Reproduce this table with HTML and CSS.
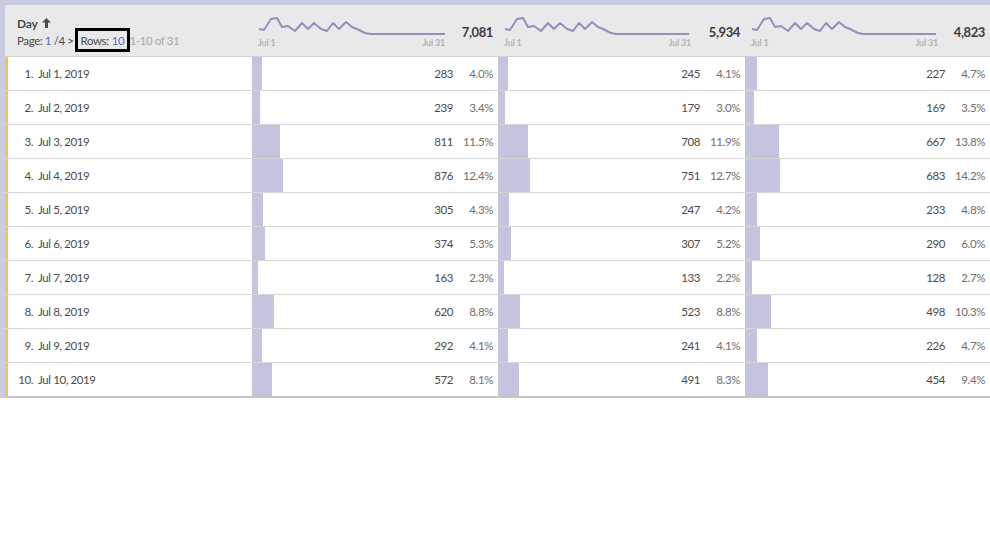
FILE: index.html
```html
<!DOCTYPE html>
<html>
<head>
<meta charset="utf-8">
<link rel="stylesheet" href="styles.css">
</head>
<body>
<div class="frame">
  <div class="table">
    <div class="head">
      <div class="hcell dim">
        <div class="dim-title">Day <svg class="arrow" width="9" height="10" viewBox="0 0 9 10"><path d="M4.5 0 L9 4.5 L6 4.5 L6 10 L3 10 L3 4.5 L0 4.5 Z" fill="#4b4b4b"/></svg></div>
        <div class="pager">
          <span>Page: <span class="link">1</span> /4 &gt;</span>
          <span class="rows">Rows: <span class="link">10</span></span>
          <span class="range">1-10 of 31</span>
        </div>
      </div>
      <div class="hcell metric">
        <div class="spark">
          <svg width="190" height="28" viewBox="0 0 190 28"><polyline points="1,19 6,20 13,9 19,8 24,17 30,16 37,21 44,13 50,19 56,13 63,19 69,21 75,13 81,19 88,12 94,17 99,19 107,23 112,24 187,24" fill="none" stroke="#9290bd" stroke-width="2" stroke-linejoin="round"/></svg>
          <div class="axis"><span>Jul 1</span><span>Jul 31</span></div>
        </div>
        <div class="total">7,081</div>
      </div>
      <div class="hcell metric">
        <div class="spark">
          <svg width="190" height="28" viewBox="0 0 190 28"><polyline points="1,19 6,20 13,9 19,8 24,17 30,16 37,21 44,13 50,19 56,13 63,19 69,21 75,13 81,19 88,12 94,17 99,19 107,23 112,24 185,24" fill="none" stroke="#9290bd" stroke-width="2" stroke-linejoin="round"/></svg>
          <div class="axis"><span>Jul 1</span><span>Jul 31</span></div>
        </div>
        <div class="total">5,934</div>
      </div>
      <div class="hcell metric">
        <div class="spark">
          <svg width="190" height="28" viewBox="0 0 190 28"><polyline points="1,19 6,20 13,9 19,8 24,17 30,16 37,21 44,13 50,19 56,13 63,19 69,21 75,13 81,19 88,12 94,17 99,19 107,23 112,24 185,24" fill="none" stroke="#9290bd" stroke-width="2" stroke-linejoin="round"/></svg>
          <div class="axis"><span>Jul 1</span><span>Jul 31</span></div>
        </div>
        <div class="total">4,823</div>
      </div>
    </div>

    <div class="row">
      <div class="cell date"><span class="idx">1.</span>Jul 1, 2019</div>
      <div class="cell m"><span class="bar" style="width:10px"></span><span class="val">283</span><span class="pct">4.0%</span></div>
      <div class="cell m"><span class="bar" style="width:10px"></span><span class="val">245</span><span class="pct">4.1%</span></div>
      <div class="cell m"><span class="bar" style="width:12px"></span><span class="val">227</span><span class="pct">4.7%</span></div>
    </div>
    <div class="row">
      <div class="cell date"><span class="idx">2.</span>Jul 2, 2019</div>
      <div class="cell m"><span class="bar" style="width:8px"></span><span class="val">239</span><span class="pct">3.4%</span></div>
      <div class="cell m"><span class="bar" style="width:7px"></span><span class="val">179</span><span class="pct">3.0%</span></div>
      <div class="cell m"><span class="bar" style="width:9px"></span><span class="val">169</span><span class="pct">3.5%</span></div>
    </div>
    <div class="row">
      <div class="cell date"><span class="idx">3.</span>Jul 3, 2019</div>
      <div class="cell m"><span class="bar" style="width:28px"></span><span class="val">811</span><span class="pct">11.5%</span></div>
      <div class="cell m"><span class="bar" style="width:30px"></span><span class="val">708</span><span class="pct">11.9%</span></div>
      <div class="cell m"><span class="bar" style="width:34px"></span><span class="val">667</span><span class="pct">13.8%</span></div>
    </div>
    <div class="row">
      <div class="cell date"><span class="idx">4.</span>Jul 4, 2019</div>
      <div class="cell m"><span class="bar" style="width:31px"></span><span class="val">876</span><span class="pct">12.4%</span></div>
      <div class="cell m"><span class="bar" style="width:32px"></span><span class="val">751</span><span class="pct">12.7%</span></div>
      <div class="cell m"><span class="bar" style="width:35px"></span><span class="val">683</span><span class="pct">14.2%</span></div>
    </div>
    <div class="row">
      <div class="cell date"><span class="idx">5.</span>Jul 5, 2019</div>
      <div class="cell m"><span class="bar" style="width:11px"></span><span class="val">305</span><span class="pct">4.3%</span></div>
      <div class="cell m"><span class="bar" style="width:11px"></span><span class="val">247</span><span class="pct">4.2%</span></div>
      <div class="cell m"><span class="bar" style="width:12px"></span><span class="val">233</span><span class="pct">4.8%</span></div>
    </div>
    <div class="row">
      <div class="cell date"><span class="idx">6.</span>Jul 6, 2019</div>
      <div class="cell m"><span class="bar" style="width:13px"></span><span class="val">374</span><span class="pct">5.3%</span></div>
      <div class="cell m"><span class="bar" style="width:13px"></span><span class="val">307</span><span class="pct">5.2%</span></div>
      <div class="cell m"><span class="bar" style="width:15px"></span><span class="val">290</span><span class="pct">6.0%</span></div>
    </div>
    <div class="row">
      <div class="cell date"><span class="idx">7.</span>Jul 7, 2019</div>
      <div class="cell m"><span class="bar" style="width:6px"></span><span class="val">163</span><span class="pct">2.3%</span></div>
      <div class="cell m"><span class="bar" style="width:6px"></span><span class="val">133</span><span class="pct">2.2%</span></div>
      <div class="cell m"><span class="bar" style="width:7px"></span><span class="val">128</span><span class="pct">2.7%</span></div>
    </div>
    <div class="row">
      <div class="cell date"><span class="idx">8.</span>Jul 8, 2019</div>
      <div class="cell m"><span class="bar" style="width:22px"></span><span class="val">620</span><span class="pct">8.8%</span></div>
      <div class="cell m"><span class="bar" style="width:22px"></span><span class="val">523</span><span class="pct">8.8%</span></div>
      <div class="cell m"><span class="bar" style="width:26px"></span><span class="val">498</span><span class="pct">10.3%</span></div>
    </div>
    <div class="row">
      <div class="cell date"><span class="idx">9.</span>Jul 9, 2019</div>
      <div class="cell m"><span class="bar" style="width:10px"></span><span class="val">292</span><span class="pct">4.1%</span></div>
      <div class="cell m"><span class="bar" style="width:10px"></span><span class="val">241</span><span class="pct">4.1%</span></div>
      <div class="cell m"><span class="bar" style="width:12px"></span><span class="val">226</span><span class="pct">4.7%</span></div>
    </div>
    <div class="row last">
      <div class="cell date"><span class="idx">10.</span>Jul 10, 2019</div>
      <div class="cell m"><span class="bar" style="width:20px"></span><span class="val">572</span><span class="pct">8.1%</span></div>
      <div class="cell m"><span class="bar" style="width:21px"></span><span class="val">491</span><span class="pct">8.3%</span><span class="grip"></span></div>
      <div class="cell m"><span class="bar" style="width:23px"></span><span class="val">454</span><span class="pct">9.4%</span></div>
    </div>
  </div>
</div>
</body>
</html>
```

FILE: styles.css
```css
html, body {
  margin: 0;
  padding: 0;
  background: #ffffff;
}
body {
  font-family: Lato, "Open Sans", sans-serif;
  font-size: 11.5px;
  letter-spacing: -0.4px;
  color: #4b4b4b;
}
.frame {
  background: #c9cbe0;
  padding: 5px 0 0 5px;
  width: 985px;
}
.table {
  width: 985px;
  background: #ffffff;
}
.head,
.row {
  display: grid;
  grid-template-columns: 247px 246px 247px 245px;
}
.head {
  height: 51px;
  background: #e9e9e9;
  border-bottom: 1px solid #d2d2d2;
}
.hcell.dim {
  padding: 11px 0 0 12px;
}
.dim-title {
  font-weight: bold;
  font-size: 12px;
  letter-spacing: -0.2px;
  color: #4b4b4b;
  display: flex;
  align-items: center;
  gap: 4px;
  height: 14px;
}
.arrow {
  display: block;
}
.pager {
  display: flex;
  align-items: center;
  margin-top: -2px;
  height: 24px;
  white-space: nowrap;
}
.link {
  color: #5c6bc0;
}
.rows {
  border: 3px solid #000000;
  height: 24px;
  box-sizing: border-box;
  padding: 0 0 0 3px;
  display: flex;
  align-items: center;
  gap: 3px;
  margin-left: 1px;
  width: 55px;
}
.range {
  color: #a8a8a8;
}
.hcell.metric {
  display: flex;
  align-items: flex-start;
  padding: 5px 5px 0 6px;
}
.spark {
  width: 190px;
}
.spark svg {
  display: block;
}
.axis {
  display: flex;
  justify-content: space-between;
  font-size: 9px;
  font-weight: bold;
  letter-spacing: -0.2px;
  color: #b4b4b4;
  margin-top: -1px;
  padding-right: 3px;
}
.total {
  margin-left: auto;
  margin-top: 14px;
  font-size: 13px;
  font-weight: bold;
  color: #3c3c3c;
}
.row {
  height: 33px;
  border-bottom: 1px solid #d6d6d6;
}
.row.last {
  border-bottom: 2px solid #c6c6c6;
}
.cell {
  display: flex;
  align-items: center;
  position: relative;
}
.cell.date {
  border-left: 3px solid #f0c84c;
  padding-left: 7px;
}
.idx {
  display: inline-block;
  width: 18px;
  text-align: right;
  margin-right: 5px;
}
.cell.m {
  align-items: stretch;
  padding-right: 5px;
}
.bar {
  display: block;
  background: #c5c4df;
}
.val {
  margin-left: auto;
  align-self: center;
}
.pct {
  width: 40px;
  text-align: right;
  align-self: center;
  color: #6e6e6e;
}
.grip {
  position: absolute;
  left: 190px;
  bottom: -3px;
  width: 14px;
  height: 2px;
  background: #bdbdbd;
}
```
